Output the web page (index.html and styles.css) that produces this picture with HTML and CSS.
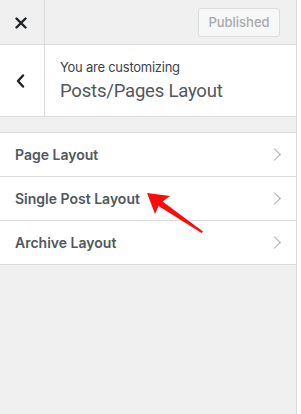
FILE: index.html
```html
<!DOCTYPE html>
<html lang="en">
<head>
  <meta charset="UTF-8">
  <meta name="viewport" content="width=device-width, initial-scale=1.0">
  <title>Customizer - Posts/Pages Layout</title>
  <link rel="stylesheet" href="styles.css">
</head>
<body>
  <div class="sidebar">
    <!-- Top bar -->
    <div class="topbar">
      <button class="close-btn" aria-label="Close">
        <svg width="12" height="12" viewBox="0 0 12 12">
          <path d="M1.5 1.5 L10.5 10.5 M10.5 1.5 L1.5 10.5" stroke="#1d2327" stroke-width="2.4" stroke-linecap="round"/>
        </svg>
      </button>
      <button class="publish-btn" disabled>Published</button>
    </div>

    <!-- Section heading -->
    <div class="section-head">
      <button class="back-btn" aria-label="Back">
        <svg width="9" height="14" viewBox="0 0 9 14">
          <path d="M7 1.5 L2 7 L7 12.5" fill="none" stroke="#1d2327" stroke-width="2.4" stroke-linecap="round" stroke-linejoin="round"/>
        </svg>
      </button>
      <div class="section-title">
        <span class="customizing">You are customizing</span>
        <h3>Posts/Pages Layout</h3>
      </div>
    </div>

    <ul class="panel-list">
      <li>Page Layout <span class="chev"></span></li>
      <li>Single Post Layout <span class="chev"></span></li>
      <li>Archive Layout <span class="chev"></span></li>
    </ul>

    <!-- annotation arrow -->
    <svg class="pointer" width="301" height="414" viewBox="0 0 301 414">
      <polygon points="147,193 170,196 162.5,201.5 203,231.5 201.5,233 158.5,206 155,214" fill="#ff0a0a"/>
    </svg>
  </div>
</body>
</html>
```

FILE: styles.css
```css
* {
  margin: 0; padding: 0; box-sizing: border-box;
}

body {
  background: #fff;
  font-family: Inter, "Noto Sans", sans-serif;
  color: #50575e;
}

.sidebar {
  position: relative;
  width: 297px;
  height: 414px;
  background: #f0f0f1;
  border-right: 1px solid #dcdcde;
}

button {
  border: none;
  background: none;
  font-family: inherit;
}

.topbar {
  display: flex;
  align-items: center;
  height: 45px;
  border-bottom: 1px solid #dcdcde;
}

.close-btn {
  width: 45px;
  height: 44px;
  border-right: 1px solid #dcdcde;
  display: flex;
  align-items: center;
  justify-content: center;
  padding-right: 3px;
  padding-top: 1px;
}

.publish-btn {
  margin-left: auto;
  margin-right: 16px;
  width: 82px;
  height: 29px;
  border: 1px solid #dcdcde;
  border-radius: 3px;
  background: #f6f7f7;
  color: #a7aaad;
  font-size: 13px;
  font-weight: 500;
}

.section-head {
  display: flex;
  background: #fff;
  height: 72px;
  border-bottom: 1px solid #dcdcde;
}

.back-btn {
  width: 45px;
  border-right: 1px solid #dcdcde;
  display: flex;
  align-items: center;
  justify-content: center;
  padding-right: 3px;
}

.section-title {
  padding: 12px 15px 0 15px;
}

.customizing {
  display: block;
  font-size: 13px;
  line-height: 20px;
  letter-spacing: -0.25px;
  color: #3c434a;
}

.section-title h3 {
  font-family: Roboto, "Noto Sans", sans-serif;
  font-size: 18.5px;
  font-weight: 400;
  line-height: 28px;
  letter-spacing: -0.2px;
  color: #50575e;
}

.panel-list {
  list-style: none;
  margin-top: 15px;
  border-top: 1px solid #dcdcde;
}

.panel-list li {
  display: flex;
  align-items: center;
  justify-content: space-between;
  height: 44px;
  padding: 0 17px 0 15px;
  background: #fff;
  border-bottom: 1px solid #dcdcde;
  font-size: 14px;
  font-weight: 600;
  color: #50575e;
}

.chev {
  width: 9px;
  height: 9px;
  border-top: 1.5px solid #a7aaad;
  border-right: 1.5px solid #a7aaad;
  transform: rotate(45deg);
}

.pointer {
  position: absolute;
  left: 0;
  top: 0;
  pointer-events: none;
}
```
